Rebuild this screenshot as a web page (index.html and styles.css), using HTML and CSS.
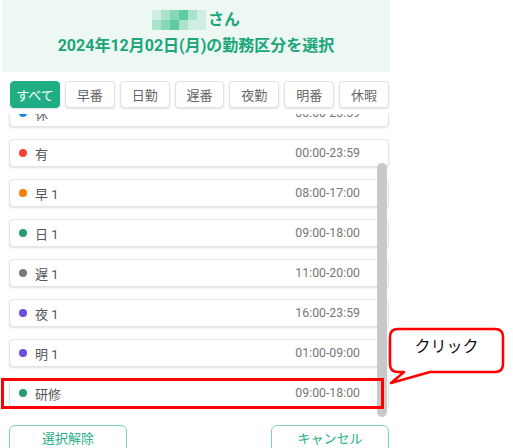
FILE: index.html
```html
<!DOCTYPE html>
<html lang="ja">
<head>
<meta charset="utf-8">
<link rel="stylesheet" href="styles.css">
</head>
<body>
<div class="panel">
  <div class="header">
    <div class="name-line">
      <span class="blur">
        <i class="c1"></i><i class="c2"></i><i class="c3"></i><i class="c4"></i><i class="c2"></i><i class="c1"></i>
        <i class="c2"></i><i class="c3"></i><i class="c4"></i><i class="c2"></i><i class="c1"></i><i class="c1"></i>
      </span><span>さん</span>
    </div>
    <div class="title">2024年12月02日(月)の勤務区分を選択</div>
  </div>
  <div class="filters">
    <button class="chip active">すべて</button>
    <button class="chip">早番</button>
    <button class="chip">日勤</button>
    <button class="chip">遅番</button>
    <button class="chip">夜勤</button>
    <button class="chip">明番</button>
    <button class="chip">休暇</button>
  </div>
  <div class="list">
    <div class="items">
      <div class="item"><span class="dot blue"></span><span class="label">休</span><span class="time">00:00-23:59</span></div>
      <div class="item"><span class="dot red"></span><span class="label">有</span><span class="time">00:00-23:59</span></div>
      <div class="item"><span class="dot orange"></span><span class="label">早 1</span><span class="time">08:00-17:00</span></div>
      <div class="item"><span class="dot green"></span><span class="label">日 1</span><span class="time">09:00-18:00</span></div>
      <div class="item"><span class="dot gray"></span><span class="label">遅 1</span><span class="time">11:00-20:00</span></div>
      <div class="item"><span class="dot purple"></span><span class="label">夜 1</span><span class="time">16:00-23:59</span></div>
      <div class="item"><span class="dot purple"></span><span class="label">明 1</span><span class="time">01:00-09:00</span></div>
      <div class="item"><span class="dot green"></span><span class="label">研修</span><span class="time">09:00-18:00</span></div>
    </div>
    <div class="scrollbar"></div>
  </div>
  <div class="actions">
    <button class="outline">選択解除</button>
    <button class="outline">キャンセル</button>
  </div>
</div>
<div class="highlight"></div>
<svg class="callout" viewBox="385 324 125 64" width="125" height="64">
  <path d="M398,329 H495 Q503,329 503,337 V364 Q503,372 495,372 H430 L391,383 L404,372 H398 Q390,372 390,364 V337 Q390,329 398,329 Z" fill="#fff" stroke="#ff0000" stroke-width="2.5" stroke-linejoin="round"/>
</svg>
<div class="callout-text">クリック</div>
</body>
</html>
```
FILE: styles.css
```css
* { box-sizing: border-box; }
html, body { margin: 0; padding: 0; }
body {
  width: 513px;
  height: 448px;
  overflow: hidden;
  background: #fff;
  font-family: Roboto, "Noto Sans CJK JP", sans-serif;
  position: relative;
}
.panel {
  width: 388px;
  margin-left: 2px;
  position: relative;
}
.header {
  height: 72px;
  background: #eef8f3;
  display: flex;
  flex-direction: column;
  align-items: center;
  padding-top: 8px;
  gap: 2px;
  color: #1ba67b;
  font-weight: 700;
  font-size: 16px;
}
.name-line {
  display: flex;
  align-items: center;
  height: 24px;
  line-height: 24px;
}
.blur {
  display: grid;
  grid-template-columns: repeat(6, 9px);
  grid-template-rows: repeat(2, 10px);
  margin-right: 2px;
}
.blur i { display: block; }
.blur .c1 { background: #cdeee0; }
.blur .c2 { background: #a9e3cb; }
.blur .c3 { background: #86d8b6; }
.blur .c4 { background: #5fcca0; }
.title {
  height: 24px;
  line-height: 24px;
}
.filters {
  margin-top: 9px;
  padding: 0 1px 0 8px;
  display: grid;
  grid-template-columns: repeat(7, 1fr);
  gap: 5px;
}
.chip {
  height: 27px;
  border: 1px solid #e2e2e2;
  border-radius: 4px;
  background: #fff;
  box-shadow: 0 1px 2px rgba(0,0,0,0.12);
  font-family: inherit;
  font-size: 13px;
  color: #666;
  padding: 0;
}
.chip.active {
  background: #1fae84;
  border-color: #1fae84;
  color: #fff;
}
.list {
  margin-top: 6px;
  height: 301px;
  overflow: hidden;
  padding: 0 1px 0 7px;
}
.items {
  margin-top: -15px;
  display: flex;
  flex-direction: column;
  gap: 12px;
}
.item {
  height: 28px;
  border: 1px solid #e4e4e4;
  border-radius: 4px;
  background: #fff;
  box-shadow: 0 1px 2px rgba(0,0,0,0.12);
  display: flex;
  align-items: center;
  padding: 0 28px 0 9px;
  font-size: 13px;
}
.dot {
  width: 8px;
  height: 8px;
  border-radius: 50%;
  margin-right: 8px;
}
.blue { background: #1e88e5; }
.red { background: #f44336; }
.orange { background: #f57c00; }
.green { background: #2a9d6c; }
.gray { background: #7a7a7a; }
.purple { background: #6b4fe0; }
.label { color: #555; flex: 1; }
.time { color: #777; font-size: 12.3px; }
.scrollbar {
  position: absolute;
  left: 375px;
  top: 163px;
  width: 10px;
  height: 254px;
  border-radius: 5px;
  background: #c9c9c9;
}
.actions {
  margin-top: 10px;
  padding: 0 1px 0 7px;
  display: flex;
  justify-content: space-between;
}
.outline {
  width: 118px;
  height: 30px;
  border: 1px solid #7dd5b8;
  border-radius: 6px;
  background: #fff;
  color: #25b085;
  font-family: inherit;
  font-size: 13px;
  padding: 0 0 6px 0;
}
.highlight {
  position: absolute;
  left: 1px;
  top: 378px;
  width: 383px;
  height: 31px;
  border: 3px solid #ff0000;
}
.callout {
  position: absolute;
  left: 385px;
  top: 324px;
}
.callout-text {
  position: absolute;
  left: 390px;
  top: 333px;
  width: 113px;
  text-align: center;
  font-family: "Noto Sans CJK JP", sans-serif;
  font-size: 16px;
  line-height: 24px;
  color: #111;
}
```
